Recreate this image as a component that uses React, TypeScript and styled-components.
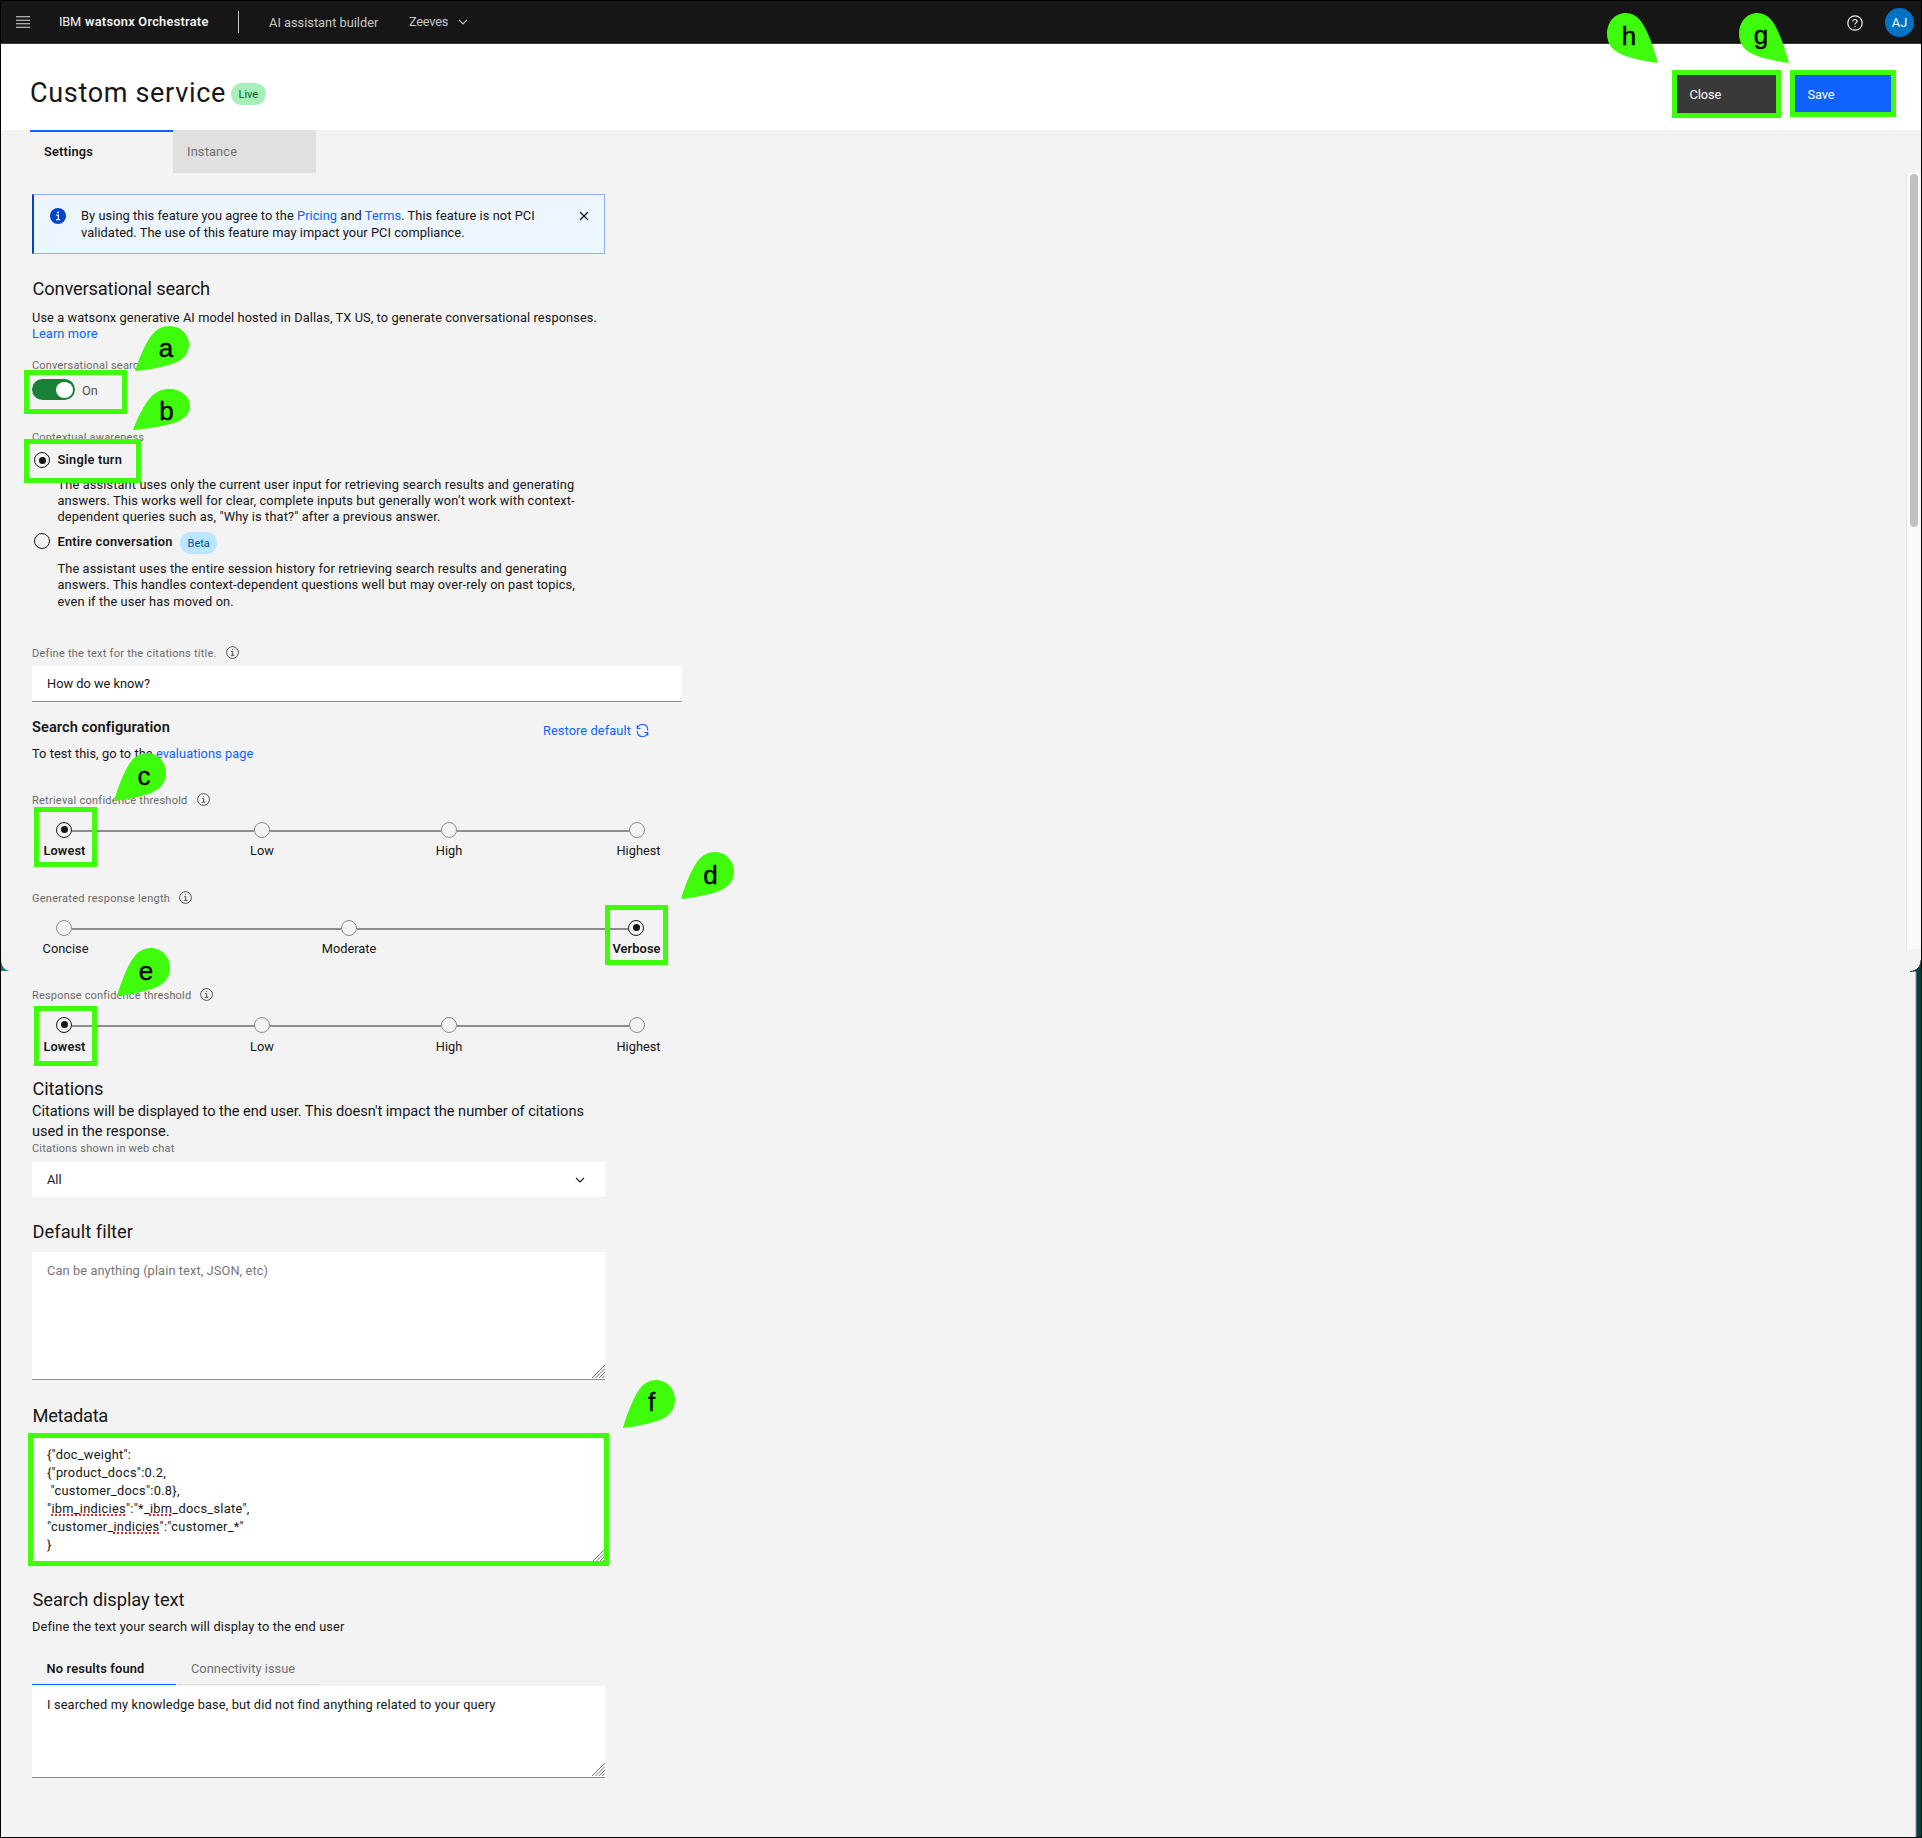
import React from "react";
import styled, { createGlobalStyle, css } from "styled-components";

const GlobalStyle = createGlobalStyle`
  * { box-sizing: border-box; }
  body {
    margin: 0;
    background: #f3f3f3;
    font-family: Roboto, "Open Sans", sans-serif;
    font-size: 12.8px;
    line-height: 16px;
    color: #161616;
  }
`;

const GREEN = "#3efc0b";

/* ---------- page frame ---------- */

const Page = styled.div`
  position: relative;
  display: flex;
  flex-direction: column;
  width: 1922px;
  height: 1838px;
  border: 1px solid #000;
  background: #f3f3f3;
  overflow: hidden;
`;

const TopBar = styled.header`
  display: flex;
  align-items: center;
  height: 43px;
  padding: 0 7px 0 15px;
  background: #161616;
  border-bottom: 1px solid #393939;
  color: #c6c6c6;
`;

const Brand = styled.div`
  display: flex;
  gap: 4px;
  margin-left: 29px;
  color: #f4f4f4;
  letter-spacing: -0.2px;
`;

const BrandName = styled.span`
  font-weight: 600;
  letter-spacing: 0.26px;
  width: 124px;
  white-space: nowrap;
`;

const BarDivider = styled.div`
  width: 1px;
  height: 22px;
  margin: 0 30px 0 29px;
  background: #c6c6c6;
`;

const Product = styled.div`
  width: 140px;
  padding-top: 2px;
`;

const Assistant = styled.div`
  display: flex;
  align-items: center;
  gap: 10px;
  letter-spacing: -0.25px;
`;

const BarActions = styled.div`
  display: flex;
  align-items: center;
  gap: 22px;
  margin-left: auto;
  padding-top: 1px;
`;

const Avatar = styled.div`
  display: grid;
  place-items: center;
  width: 29px;
  height: 29px;
  border-radius: 50%;
  background: #0072c3;
  color: #fff;
`;

const TitleBar = styled.div`
  display: flex;
  height: 86px;
  padding: 0 30px 0 29px;
  background: #fff;
`;

const PageTitle = styled.h1`
  margin: 32px 6px 0 0;
  width: 195px;
  height: 34px;
  font-size: 27px;
  font-weight: 400;
  line-height: 34px;
  letter-spacing: 0.68px;
  white-space: nowrap;
`;

const Tag = styled.span<{ $bg: string; $fg: string; $mt?: number }>`
  display: inline-flex;
  align-items: center;
  height: 22px;
  margin-top: ${(p) => p.$mt ?? 0}px;
  padding: 2px 7.5px 0;
  border-radius: 11px;
  background: ${(p) => p.$bg};
  color: ${(p) => p.$fg};
  font-size: 11px;
`;

const TitleActions = styled.div`
  display: flex;
  gap: 19px;
  margin: 31px 0 0 auto;
`;

const ActionButton = styled.div<{ $primary?: boolean }>`
  display: flex;
  align-items: center;
  width: ${(p) => (p.$primary ? 96 : 99)}px;
  height: 38px;
  padding: 1px 0 0 12.5px;
  background: ${(p) => (p.$primary ? "#0f62fe" : "#393939")};
  color: #fff;
  letter-spacing: -0.1px;
`;

/* ---------- main area ---------- */

const Tabs = styled.nav`
  display: flex;
  height: 43px;
  padding-left: 29px;
`;

const Tab = styled.div<{ $active?: boolean }>`
  display: flex;
  align-items: center;
  width: 143px;
  padding: 0 14px;
  letter-spacing: 0.16px;
  ${(p) =>
    p.$active
      ? css`
          padding-bottom: 2px;
          border-top: 2px solid #0f62fe;
          font-weight: 600;
        `
      : css`
          background: #e0e0e0;
          color: #6f6f6f;
        `}
`;

const Body = styled.div`
  display: flex;
  justify-content: space-between;
  flex: 1;
`;

const Column = styled.main`
  display: flex;
  flex-direction: column;
  width: 681px;
  padding-left: 31px;
`;

const Notice = styled.div`
  display: flex;
  width: 573px;
  height: 60px;
  margin-top: 21px;
  padding: 12px 15px 0 16px;
  border: 1px solid #8fb0ee;
  border-left: 2px solid #0043ce;
  background: #edf5ff;
  line-height: 17px;
  letter-spacing: 0.07px;

  svg {
    margin-top: 1px;
  }

  svg:last-child {
    margin-top: 4px;
  }
`;

const NoticeText = styled.div`
  flex: 1;
  margin-left: 15px;
  white-space: nowrap;
`;

const Link = styled.span`
  color: #0f62fe;
`;

const Heading = styled.h2<{ $mt: number; $ls?: number }>`
  margin: ${(p) => p.$mt}px 0 0;
  padding-left: 0.5px;
  font-size: 18.3px;
  font-weight: 400;
  line-height: 24px;
  letter-spacing: ${(p) => p.$ls ?? -0.17}px;
`;

const Text = styled.p<{ $mt: number; $indent?: number; $ls?: number; $lh?: number }>`
  margin: ${(p) => p.$mt}px 0 0;
  padding-left: ${(p) => p.$indent ?? 0}px;
  line-height: ${(p) => p.$lh ?? 16}px;
  letter-spacing: ${(p) => p.$ls ?? 0.1}px;
  white-space: nowrap;
`;

const LargeText = styled.p`
  margin: 0;
  font-size: 14.6px;
  line-height: 20px;
  letter-spacing: -0.04px;
  white-space: nowrap;
`;

const Label = styled.div<{ $mt: number; $h?: number; $ls?: number }>`
  display: flex;
  align-items: center;
  gap: 9px;
  height: ${(p) => p.$h ?? 16}px;
  margin-top: ${(p) => p.$mt}px;
  padding-top: 2px;
  font-size: 11px;
  letter-spacing: ${(p) => p.$ls ?? 0.24}px;
  color: #6a6a6a;
  white-space: nowrap;

  svg {
    margin-top: -2px;
  }
`;

const ToggleRow = styled.div`
  display: flex;
  align-items: center;
  gap: 7px;
  margin-top: 7px;
  height: 21px;
  color: #525252;
`;

const ToggleState = styled.span`
  padding-top: 2px;
`;

const Toggle = styled.div`
  display: flex;
  justify-content: flex-end;
  width: 43px;
  height: 21px;
  padding: 2.5px;
  border-radius: 11px;
  background: #198038;

  &::after {
    content: "";
    width: 17px;
    height: 16px;
    border-radius: 50%;
    background: #fff;
  }
`;

const Radio = styled.div<{ $on?: boolean; $muted?: boolean }>`
  display: grid;
  place-items: center;
  flex: none;
  width: 16px;
  height: 16px;
  border: 1px solid ${(p) => (p.$muted ? "#8d8d8d" : "#161616")};
  border-radius: 50%;

  &::after {
    content: "";
    width: ${(p) => (p.$on ? 7 : 0)}px;
    height: ${(p) => (p.$on ? 7 : 0)}px;
    border-radius: 50%;
    background: #161616;
  }
`;

const RadioRow = styled.div<{ $mt: number; $h: number; $lift?: number }>`
  display: flex;
  align-items: center;
  height: ${(p) => p.$h}px;
  margin-top: ${(p) => p.$mt}px;
  padding-left: 2px;
  gap: 7.5px;
  font-weight: 600;
  letter-spacing: 0.22px;

  ${Radio} {
    margin-bottom: ${(p) => (p.$lift ?? 0) * 2}px;
  }

  ${Tag} {
    font-weight: 400;
    letter-spacing: 0;
  }
`;

const RadioName = styled.span<{ $lift?: number }>`
  margin-bottom: ${(p) => (p.$lift ?? 0) * 2}px;
`;

const TextInput = styled.div`
  display: flex;
  align-items: center;
  width: 650px;
  height: 36px;
  margin-top: 5px;
  padding: 2px 0 0 15px;
  background: #fff;
  border-bottom: 1px solid #8d8d8d;
`;

const ConfigRow = styled.div`
  display: flex;
  justify-content: space-between;
  width: 617px;
  height: 22px;
  margin-top: 14px;
  line-height: 22px;
`;

const ConfigTitle = styled.h3`
  margin: 0;
  font-size: 14.6px;
  font-weight: 600;
  letter-spacing: 0.07px;
`;

const RestoreLink = styled.div`
  display: flex;
  align-items: center;
  gap: 5px;
  margin-top: 4px;
  height: 22px;
  color: #0f62fe;
  letter-spacing: 0.1px;
`;

const SliderRow = styled.div`
  display: flex;
  height: 37px;
  margin-top: 14px;
  padding-left: 24px;
`;

const Stop = styled.div<{ $gap?: number }>`
  display: flex;
  flex-direction: column;
  align-items: center;
  flex: none;
  width: 16px;
  gap: ${(p) => p.$gap ?? 5}px;
`;

const StopLabel = styled.span<{ $on?: boolean; $shift?: number }>`
  font-weight: ${(p) => (p.$on ? 600 : 400)};
  letter-spacing: ${(p) => (p.$on ? 0.1 : 0)}px;
  padding-left: ${(p) => p.$shift ?? 0}px;
  white-space: nowrap;
`;

const Track = styled.div<{ $w: number }>`
  flex: none;
  width: ${(p) => p.$w}px;
  height: 2px;
  margin-top: 8px;
  background: #8d8d8d;
`;

const Select = styled.div`
  display: flex;
  align-items: center;
  justify-content: space-between;
  width: 573px;
  height: 35px;
  margin-top: 7px;
  padding: 2px 20px 0 15px;
  background: #fff;
`;

const TextBox = styled.div<{ $h: number; $mt: number; $muted?: boolean; $ls?: number }>`
  display: flex;
  justify-content: space-between;
  width: 573px;
  height: ${(p) => p.$h}px;
  margin-top: ${(p) => p.$mt}px;
  padding: 10px 0 1px 15px;
  background: #fff;
  border-bottom: 1px solid #8d8d8d;
  color: ${(p) => (p.$muted ? "#767676" : "#161616")};
  line-height: 18px;
  letter-spacing: ${(p) => p.$ls ?? 0.1}px;
  white-space: pre;

  > svg {
    align-self: flex-end;
  }
`;

const CodeLine = styled.div`
  height: 18px;
`;

const Misspelled = styled.span`
  text-decoration: underline dotted #e8262d 2px;
  text-underline-offset: 2px;
  text-decoration-skip-ink: none;
`;

const LineTabs = styled.div`
  display: flex;
  gap: 1px;
  height: 30px;
  margin-top: 20px;
`;

const LineTab = styled.div<{ $active?: boolean }>`
  width: 143.5px;
  padding: 6px 0 0 14.5px;
  border-bottom: 1px solid ${(p) => (p.$active ? "#0f62fe" : "#dcdcdc")};
  font-weight: ${(p) => (p.$active ? 600 : 400)};
  color: ${(p) => (p.$active ? "#161616" : "#6f6f6f")};
  letter-spacing: ${(p) => (p.$active ? 0.17 : 0.04)}px;
`;

const ScrollRail = styled.aside`
  display: flex;
  flex-direction: column;
  align-items: flex-end;
  width: 15px;
`;

const ScrollTrack = styled.div`
  width: 15px;
  height: 776px;
  padding: 1px 3px 0;
  border-left: 1px solid #e6e6e6;
  background: #fafafa;
`;

const ScrollThumb = styled.div`
  width: 8px;
  height: 353px;
  border-radius: 4px;
  background: #c1c1c1;
`;

const BackdropEdge = styled.div`
  flex: 1;
  width: 6px;
  margin-top: 22px;
  border-left: 1px solid #b9c3c3;
  background: linear-gradient(90deg, #4b6163 1px, #003f42 1px);
`;

/* ---------- annotations laid over the page ---------- */

const Outline = styled.div<{ $x: number; $y: number; $w: number; $h: number }>`
  position: absolute;
  left: ${(p) => p.$x - 1}px;
  top: ${(p) => p.$y - 1}px;
  width: ${(p) => p.$w}px;
  height: ${(p) => p.$h}px;
  border: 5px solid ${GREEN};
`;

const Pin = styled.div<{ $x: number; $y: number; $w: number; $h: number; $flip?: boolean }>`
  position: absolute;
  left: ${(p) => p.$x - 1}px;
  top: ${(p) => p.$y - 1}px;
  width: ${(p) => p.$w}px;
  height: ${(p) => p.$h}px;

  svg {
    display: block;
    width: 100%;
    height: 100%;
    transform: ${(p) => (p.$flip ? "scaleX(-1)" : "none")};
  }
`;

const PinLetter = styled.span<{ $x: number; $y: number }>`
  position: absolute;
  left: ${(p) => p.$x - 15}px;
  top: ${(p) => p.$y - 15}px;
  width: 30px;
  height: 30px;
  font: 26px/30px "Liberation Sans", Arial, sans-serif;
  color: #000;
  text-align: center;
  -webkit-text-stroke: 0.4px #000;
`;

const Corner = styled.svg<{ $right?: boolean }>`
  position: absolute;
  top: 957px;
  ${(p) => (p.$right ? "right: 0;" : "left: 0;")}
`;

/* ---------- icons ---------- */

const MenuIcon = () => (
  <svg width="14" height="12" viewBox="0 0 14 12" stroke="#e0e0e0" strokeWidth="1.1">
    <path d="M0 .7h14M0 4.2h14M0 7.7h14M0 11.2h14" />
  </svg>
);

const Chevron = ({ color }: { color: string }) => (
  <svg width="10" height="6" viewBox="0 0 10 6" fill="none" stroke={color} strokeWidth="1.2">
    <path d="M1 .8l4 4 4-4" />
  </svg>
);

const HelpIcon = () => (
  <svg width="16" height="16" viewBox="0 0 16 16" fill="none" stroke="#f4f4f4" strokeWidth="1.2">
    <circle cx="8" cy="8" r="7.2" />
    <path d="M5.9 6.4c0-1.1.9-1.9 2.1-1.9s2.1.7 2.1 1.8C10.1 7.600 8 7.700 8 9.500" />
    <circle cx="8" cy="11.600" r=".35" fill="#f4f4f4" strokeWidth=".8" />
  </svg>
);

const InfoFilled = () => (
  <svg width="16" height="16" viewBox="0 0 16 16">
    <circle cx="8" cy="8" r="8" fill="#0043ce" />
    <circle cx="8" cy="4.500" r="1" fill="#fff" />
    <path d="M6.200 7.200H8.400V11.500M6 11.600h4.200" fill="none" stroke="#fff" strokeWidth="1.200" />
  </svg>
);

const InfoIcon = () => (
  <svg width="13" height="13" viewBox="0 0 13 13" fill="none" stroke="#525252">
    <circle cx="6.500" cy="6.500" r="5.900" />
    <path d="M5.200 5.500h1.500v3.700M4.800 9.300h3.600" />
    <circle cx="6.500" cy="3.500" r=".6" fill="#525252" stroke="none" />
  </svg>
);

const CloseIcon = () => (
  <svg width="10" height="10" viewBox="0 0 10 10" stroke="#161616" strokeWidth="1.200">
    <path d="M1 1l8 8M9 1l-8 8" />
  </svg>
);

const RenewIcon = () => (
  <svg width="13" height="13" viewBox="0 0 16 16" fill="none" stroke="#0f62fe" strokeWidth="1.300">
    <path d="M1.500 1.500v4h4M1.800 5.400A6.300 6.300 0 0 1 14.300 8" />
    <path d="M14.500 14.500v-4h-4M14.200 10.600A6.300 6.300 0 0 1 1.700 8" />
  </svg>
);

const ResizeGrip = () => (
  <svg width="13" height="13" viewBox="0 0 13 13" stroke="#6f6f6f">
    <path d="M0 13L13 0M3.500 13L13 3.500M7 13l6-6M10.300 13l2.700-2.700" />
  </svg>
);

/* ---------- composed parts ---------- */

type StopSpec = { name: string; on?: boolean; shift?: number };

const Slider = ({ stops, gaps, labelGap }: { stops: StopSpec[]; gaps: number[]; labelGap?: number }) => (
  <SliderRow>
    {stops.map((s, i) => (
      <React.Fragment key={s.name}>
        <Stop $gap={labelGap}>
          <Radio $on={s.on} $muted={!s.on} />
          <StopLabel $on={s.on} $shift={s.shift}>
            {s.name}
          </StopLabel>
        </Stop>
        {i < gaps.length && <Track $w={gaps[i]} />}
      </React.Fragment>
    ))}
  </SliderRow>
);

const LEVELS: StopSpec[] = [
  { name: "Lowest", on: true, shift: 1 },
  { name: "Low" },
  { name: "High" },
  { name: "Highest", shift: 3 },
];
const LEVEL_GAPS = [182, 171, 172];

const LENGTHS: StopSpec[] = [
  { name: "Concise", shift: 3 },
  { name: "Moderate" },
  { name: "Verbose", on: true, shift: 1 },
];
const LENGTH_GAPS = [269, 271];

type PinSpec = {
  letter: string;
  x: number;
  y: number;
  w: number;
  h: number;
  lx: number;
  ly: number;
  flip?: boolean;
};

const PINS: PinSpec[] = [
  { letter: "a", x: 135, y: 326, w: 54, h: 45, lx: 31, ly: 22 },
  { letter: "b", x: 133, y: 389, w: 57, h: 41, lx: 33.5, ly: 22 },
  { letter: "c", x: 114, y: 753, w: 52, h: 48, lx: 30, ly: 23 },
  { letter: "d", x: 681, y: 852, w: 53, h: 47, lx: 29.5, ly: 23 },
  { letter: "e", x: 117, y: 948, w: 53, h: 48, lx: 29, ly: 23 },
  { letter: "f", x: 623, y: 1380, w: 52, h: 48, lx: 28.5, ly: 22 },
  { letter: "g", x: 1739, y: 13, w: 50, h: 50, lx: 22, ly: 22, flip: true },
  { letter: "h", x: 1607, y: 13, w: 51, h: 50, lx: 22, ly: 23, flip: true },
];

const OUTLINES = [
  [24, 370, 103, 44],
  [24, 439, 117, 44],
  [34, 807, 63, 60],
  [605, 905, 63, 60],
  [34, 1006, 63, 60],
  [28, 1433, 581, 133],
  [1672, 70, 109, 48],
  [1790, 70, 106, 47],
];

export default function App() {
  return (
    <>
      <GlobalStyle />
      <Page>
        <TopBar>
          <MenuIcon />
          <Brand>
            IBM
            <BrandName>watsonx Orchestrate</BrandName>
          </Brand>
          <BarDivider />
          <Product>AI assistant builder</Product>
          <Assistant>
            Zeeves
            <Chevron color="#c6c6c6" />
          </Assistant>
          <BarActions>
            <HelpIcon />
            <Avatar>AJ</Avatar>
          </BarActions>
        </TopBar>

        <TitleBar>
          <PageTitle>Custom service</PageTitle>
          <Tag $bg="#a7f0ba" $fg="#0e6027" $mt={39}>
            Live
          </Tag>
          <TitleActions>
            <ActionButton>Close</ActionButton>
            <ActionButton $primary>Save</ActionButton>
          </TitleActions>
        </TitleBar>

        <Tabs>
          <Tab $active>Settings</Tab>
          <Tab>Instance</Tab>
        </Tabs>

        <Body>
          <Column>
            <Notice>
              <InfoFilled />
              <NoticeText>
                By using this feature you agree to the <Link>Pricing</Link> and <Link>Terms</Link>. This feature is not PCI
                <br />
                validated. The use of this feature may impact your PCI compliance.
              </NoticeText>
              <CloseIcon />
            </Notice>

            <Heading $mt={23}>Conversational search</Heading>
            <Text $mt={9} $ls={0.095}>
              Use a watsonx generative AI model hosted in Dallas, TX US, to generate conversational responses.
              <br />
              <Link>Learn more</Link>
            </Text>
            <Label $mt={16} $h={14} $ls={0.2}>
              Conversational search
            </Label>
            <ToggleRow>
              <Toggle />
              <ToggleState>On</ToggleState>
            </ToggleRow>

            <Label $mt={30} $h={14} $ls={0.19}>
              Contextual awareness
            </Label>
            <RadioRow $mt={7} $h={18}>
              <Radio $on />
              <RadioName>Single turn</RadioName>
            </RadioRow>
            <Text $mt={8} $indent={25.5} $ls={0.13}>
              The assistant uses only the current user input for retrieving search results and generating
              <br />
              answers. This works well for clear, complete inputs but generally won’t work with context-
              <br />
              dependent queries such as, "Why is that?" after a previous answer.
            </Text>
            <RadioRow $mt={7} $h={22} $lift={2}>
              <Radio />
              <RadioName $lift={1}>Entire conversation</RadioName>
              <Tag $bg="#bae6ff" $fg="#00539a">
                Beta
              </Tag>
            </RadioRow>
            <Text $mt={7} $indent={25.5} $ls={0.11} $lh={16.33}>
              The assistant uses the entire session history for retrieving search results and generating
              <br />
              answers. This handles context-dependent questions well but may over-rely on past topics,
              <br />
              even if the user has moved on.
            </Text>

            <Label $mt={35} $ls={0.25}>
              Define the text for the citations title.
              <InfoIcon />
            </Label>
            <TextInput>How do we know?</TextInput>

            <ConfigRow>
              <ConfigTitle>Search configuration</ConfigTitle>
              <RestoreLink>
                Restore default
                <RenewIcon />
              </RestoreLink>
            </ConfigRow>
            <Text $mt={8} $ls={0.06}>
              To test this, go to the <Link>evaluations page</Link>
            </Text>

            <Label $mt={30} $ls={0.25}>
              Retrieval confidence threshold
              <InfoIcon />
            </Label>
            <Slider stops={LEVELS} gaps={LEVEL_GAPS} />

            <Label $mt={31} $ls={0.27}>
              Generated response length
              <InfoIcon />
            </Label>
            <Slider stops={LENGTHS} gaps={LENGTH_GAPS} />

            <Label $mt={30} $ls={0.18}>
              Response confidence threshold
              <InfoIcon />
            </Label>
            <Slider stops={LEVELS} gaps={LEVEL_GAPS} labelGap={6} />

            <Heading $mt={23} $ls={-0.22}>
              Citations
            </Heading>
            <LargeText>
              Citations will be displayed to the end user. This doesn't impact the number of citations
              <br />
              used in the response.
            </LargeText>
            <Label $mt={0} $h={14} $ls={0.19}>
              Citations shown in web chat
            </Label>
            <Select>
              All
              <Chevron color="#161616" />
            </Select>

            <Heading $mt={23} $ls={0.03}>
              Default filter
            </Heading>
            <TextBox $mt={8} $h={128} $muted>
              Can be anything (plain text, JSON, etc)
              <ResizeGrip />
            </TextBox>

            <Heading $mt={24} $ls={-0.28}>
              Metadata
            </Heading>
            <TextBox $mt={8} $h={128} $ls={0.29}>
              <div>
                <CodeLine>{'{"doc_weight":'}</CodeLine>
                <CodeLine>{'{"product_docs":0.2,'}</CodeLine>
                <CodeLine>{' "customer_docs":0.8},'}</CodeLine>
                <CodeLine>
                  "<Misspelled>ibm_indicies</Misspelled>":"*_<Misspelled>ibm</Misspelled>_docs_slate",
                </CodeLine>
                <CodeLine>
                  "customer_<Misspelled>indicies</Misspelled>":"customer_*"
                </CodeLine>
                <CodeLine>{"}"}</CodeLine>
              </div>
              <ResizeGrip />
            </TextBox>

            <Heading $mt={24} $ls={-0.07}>
              Search display text
            </Heading>
            <Text $mt={7} $ls={0.13}>
              Define the text your search will display to the end user
            </Text>
            <LineTabs>
              <LineTab $active>No results found</LineTab>
              <LineTab>Connectivity issue</LineTab>
            </LineTabs>
            <TextBox $mt={1} $h={92} $ls={0.138}>
              I searched my knowledge base, but did not find anything related to your query
              <ResizeGrip />
            </TextBox>
          </Column>

          <ScrollRail>
            <ScrollTrack>
              <ScrollThumb />
            </ScrollTrack>
            <BackdropEdge />
          </ScrollRail>
        </Body>

        <Corner width="10" height="13" viewBox="0 0 10 13">
          <path d="M0 0C0 8 3 12.500 10 13H0Z" fill="#11807f" />
        </Corner>
        <Corner $right width="12" height="14" viewBox="0 0 12 14">
          <path d="M12 2C12 9 8 13 1 13.500H12Z" fill="#003f42" />
          <path d="M12 2C12 9 8 13 1 13.500" fill="none" stroke="#1b2b2c" />
        </Corner>

        {OUTLINES.map(([x, y, w, h]) => (
          <Outline key={`${x}-${y}`} $x={x} $y={y} $w={w} $h={h} />
        ))}
        {PINS.map((p) => (
          <Pin key={p.letter} $x={p.x} $y={p.y} $w={p.w} $h={p.h} $flip={p.flip}>
            <svg viewBox="0 0 52 48" preserveAspectRatio="none">
              <path
                d="M0 48C4 34 11 16 17 8.500C21 3 27 0 33 0C44 0 52 9 52 20C52 28 48 34 41 38C33 42.500 14 46.500 0 48Z"
                fill={GREEN}
              />
            </svg>
            <PinLetter $x={p.lx} $y={p.ly}>
              {p.letter}
            </PinLetter>
          </Pin>
        ))}
      </Page>
    </>
  );
}
